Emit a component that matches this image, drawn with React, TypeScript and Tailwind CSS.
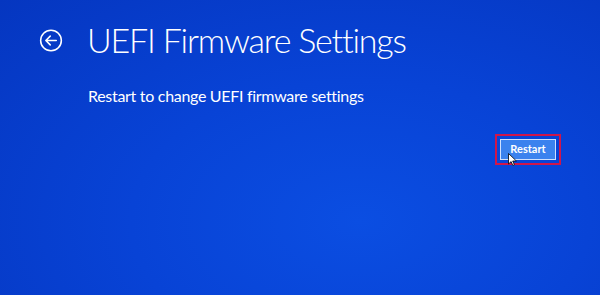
import React from "react";

function BackIcon() {
  return (
    <svg width="24" height="23" viewBox="0 0 24 24" fill="none" stroke="white" strokeWidth="1.6">
      <circle cx="12" cy="12" r="10.8" />
      <path d="M17.5 12H6.8M11.2 7.4 6.6 12l4.6 4.6" strokeLinecap="round" strokeLinejoin="round" />
    </svg>
  );
}

function Cursor() {
  return (
    <svg width="9" height="13" viewBox="0 0 9 13" className="absolute left-[11px] top-[17px]">
      <path d="M0.5 0.5v10.5l2.6-2.4 1.7 3.8 1.6-0.7-1.7-3.7H8.4z" fill="white" stroke="black" strokeWidth="0.8" strokeLinejoin="round" />
    </svg>
  );
}

export default function App() {
  return (
    <div
      className="h-[295px] w-[600px] overflow-hidden bg-[radial-gradient(ellipse_at_60%_75%,#0b4ee2_0%,#0843d6_45%,#0536c0_100%)] text-white"
      style={{ fontFamily: 'Lato, "Open Sans", sans-serif' }}
    >
      <div className="px-[39px] pt-[23px]">
        <div className="flex items-center">
          <BackIcon />
          <h1 className="ml-[24px] text-[34px] font-light leading-none tracking-[-1.2px]">
            UEFI Firmware Settings
          </h1>
        </div>
        <p className="ml-[49px] mt-[31px] text-[16px] leading-none tracking-[-0.3px]">
          Restart to change UEFI firmware settings
        </p>
        <div className="mt-[30px] flex justify-end">
          <div className="relative border-2 border-[#d0164a] p-[3px]">
            <button
              type="button"
              className="flex h-[21px] w-[56px] items-center justify-center border border-[#cfe0ff] bg-[#3b82ee] text-[11px] font-bold text-white"
            >
              Restart
            </button>
            <Cursor />
          </div>
        </div>
      </div>
    </div>
  );
}
